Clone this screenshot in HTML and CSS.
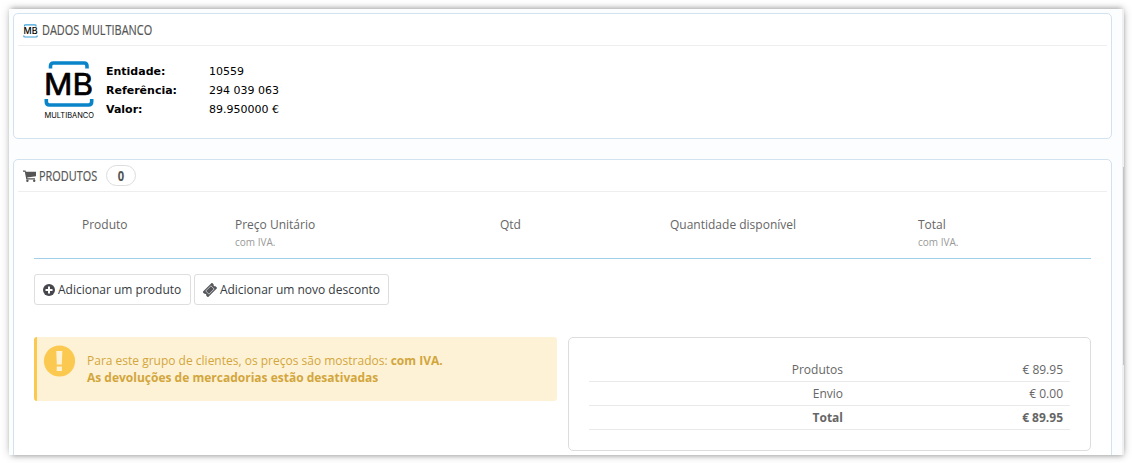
FILE: index.html
```
<!DOCTYPE html>
<html lang="pt">
<head>
  <meta charset="utf-8">
  <title>Encomenda</title>
  <link rel="stylesheet" href="styles.css">
</head>
<body>
  <div class="window">
    <div class="content">
      <section class="panel panel-mb">
        <h3 class="panel-heading">
          <svg class="icon-mb" width="15" height="14" viewBox="0 0 15 14">
            <path d="M1.500 2.500V1.500Q1.500 .8 2.500 .8H12Q13 .8 13 1.500V2.500M.8 11.500V12.300Q.8 13 2 13H13Q14.200 13 14.200 12.300V11.500" fill="none" stroke="#3fa0d6" stroke-width="1.200"/>
            <text class="icon-letters" x=".5" y="10" textLength="14" lengthAdjust="spacingAndGlyphs">MB</text>
          </svg>
          <span class="title title-mb"><span>DADOS MULTIBANCO</span></span>
        </h3>
        <div class="mb-data">
          <svg class="logo-mb" width="52" height="60" viewBox="0 0 52 60">
            <path d="M7.500 8.500V6Q7.500 3 10.500 3H41Q44 3 44 6V8.500" fill="none" stroke="#0a84c9" stroke-width="3.600"/>
            <path d="M3.300 39V41.500Q3.300 45 6.500 45H45.500Q48.700 45 48.700 41.500V39" fill="none" stroke="#0a84c9" stroke-width="3.600"/>
            <text class="logo-letters" x="1" y="34.500" textLength="49" lengthAdjust="spacingAndGlyphs">MB</text>
            <text class="logo-name" x="1.500" y="58" textLength="49.500" lengthAdjust="spacingAndGlyphs">MULTIBANCO</text>
          </svg>
          <dl class="mb-list">
            <dt>Entidade:</dt><dd>10559</dd>
            <dt>Referência:</dt><dd>294 039 063</dd>
            <dt>Valor:</dt><dd>89.950000 €</dd>
          </dl>
        </div>
      </section>

      <section class="panel panel-products">
        <h3 class="panel-heading">
          <svg class="icon-cart" width="13" height="12" viewBox="0 0 13 12">
            <path d="M0 .5H2.500L2.900 1.800H13V6.300L4.200 7.500L4.400 8.300H12V9.500H3.300L1.800 1.700H0Z" fill="#555"/>
            <circle cx="4.400" cy="10.800" r="1.200" fill="#555"/>
            <circle cx="11.200" cy="10.800" r="1.200" fill="#555"/>
          </svg>
          <span class="title title-products"><span>PRODUTOS</span></span>
          <span class="badge"><span>0</span></span>
        </h3>

        <div class="products-head">
          <div>Produto</div>
          <div>Preço Unitário<small>com IVA.</small></div>
          <div>Qtd</div>
          <div>Quantidade disponível</div>
          <div>Total<small>com IVA.</small></div>
        </div>

        <div class="actions">
          <button class="btn">
            <svg width="12" height="12" viewBox="0 0 12 12">
              <circle cx="6" cy="6" r="6" fill="#45474d"/>
              <path d="M6 2.500V9.500M2.500 6H9.500" stroke="#fff" stroke-width="2"/>
            </svg>
            Adicionar um produto
          </button>
          <button class="btn btn-discount">
            <svg width="14" height="14" viewBox="0 0 14 14">
              <g transform="rotate(-45 7 7)">
                <path d="M.3 3.200H13.700V5.700A1.400 1.400 0 0 0 13.700 8.300V10.800H.3V8.300A1.400 1.400 0 0 0 .3 5.700Z" fill="#55575c"/>
                <path d="M3.300 4.700H10.700V9.300H3.300Z" fill="none" stroke="#fff" stroke-width=".6"/>
              </g>
            </svg>
            Adicionar um novo desconto
          </button>
        </div>

        <div class="summary">
          <div class="alert">
            <svg width="32" height="32" viewBox="0 0 32 32">
              <circle cx="16.500" cy="16" r="15.600" fill="#fbc94f"/>
              <path d="M13.300 6H19.300L18.800 19.500H13.800ZM13.700 21.500H18.900V26H13.700Z" fill="#fef2d6"/>
            </svg>
            <div>Para este grupo de clientes, os preços são mostrados: <b>com IVA.</b><br><b>As devoluções de mercadorias estão desativadas</b></div>
          </div>
          <div class="totals">
            <div class="row"><span>Produtos</span><span>€ 89.95</span></div>
            <div class="row"><span>Envio</span><span>€ 0.00</span></div>
            <div class="row row-total"><span>Total</span><span>€ 89.95</span></div>
          </div>
        </div>
      </section>
    </div>
    <div class="scrollbar"><div class="thumb"></div></div>
  </div>
</body>
</html>
```
FILE: styles.css
```
* {
  box-sizing: border-box;
}
body {
  margin: 0;
  padding: 9px 8px 8px 9px;
  height: 463px;
  overflow: hidden;
  background: #fff;
  font: 12px/17px "Open Sans", sans-serif;
  color: #666;
}
.window {
  display: flex;
  width: 1115px;
  height: 446px;
  overflow: hidden;
  background: #fcfdfe;
  box-shadow: 0 0 9px rgba(0,0,0,0.18), 0 -3px 5px -2px rgba(0,0,0,0.26), 1px 3px 5px -2px rgba(0,0,0,0.26);
}
.content {
  flex: 1;
  padding: 4px 10px 0 4px;
}
.panel {
  width: 1099px;
  padding: 0 4px;
  border: 1px solid #d3e2ef;
  border-radius: 5px;
  background: #fff;
}
.panel-mb {
  height: 126px;
  margin-bottom: 20px;
}
.panel-products {
  height: 330px;
}
.panel-heading {
  display: flex;
  align-items: center;
  height: 32px;
  margin: 0;
  padding: 0 0 0 5px;
  border-bottom: 1px solid #eee;
  font-size: 14px;
  font-weight: 400;
  color: #555;
}
.icon-mb {
  margin: 2px 4px 0 0;
}
.icon-letters {
  font: 500 8.5px Inter, sans-serif;
}
.icon-cart {
  margin-right: 3px;
}
/* condensed heading letters */
.title span {
  display: inline-block;
  white-space: nowrap;
  transform: scaleX(0.78);
  transform-origin: left;
  -webkit-text-stroke: 0.2px #555;
}
.title-mb {
  width: 112px;
}
.title-products {
  width: 67px;
}
.badge {
  width: 30px;
  height: 21px;
  border: 1px solid #ddd;
  border-radius: 11px;
  font-size: 14px;
  font-weight: 700;
  line-height: 19px;
  text-align: center;
}
.badge span {
  display: inline-block;
  transform: scaleX(0.8);
}
.mb-data {
  display: flex;
  padding: 14px 0 0 25px;
}
.logo-letters {
  font: 400 30px Inter, sans-serif;
  stroke: #000;
  stroke-width: 0.7px;
  stroke-linejoin: round;
}
.logo-name {
  font: 400 7.2px Inter, sans-serif;
}
.mb-list {
  display: grid;
  grid-template-columns: 103px auto;
  grid-auto-rows: 19px;
  margin: 2px 0 0 11px;
  font: 11px/19px "DejaVu Sans", sans-serif;
  color: #000;
}
.mb-list dt {
  font-weight: 700;
}
.mb-list dd {
  margin: 0;
}
.products-head {
  display: grid;
  grid-template-columns: 153px 265px 170px 248px 1fr;
  height: 67px;
  margin: 0 16px 15px;
  padding: 24px 0 0 48px;
  border-bottom: 1px solid #a0d0eb;
}
.products-head small {
  display: block;
  font-size: 10px;
  line-height: 19px;
  color: #999;
}
.actions {
  display: flex;
  gap: 3px;
  margin: 0 16px 32px;
}
.btn {
  display: flex;
  align-items: center;
  gap: 3px;
  width: 157px;
  height: 31px;
  padding: 0 8px;
  border: 1px solid #dedede;
  border-radius: 3px;
  background: #fff;
  font: inherit;
  color: #363a41;
  white-space: nowrap;
}
.btn-discount {
  width: 195px;
}
.summary {
  display: flex;
  align-items: flex-start;
  gap: 11px;
  margin: 0 16px;
}
.alert {
  display: flex;
  width: 523px;
  height: 64px;
  padding: 8px 6px;
  border-left: 3px solid #fbc94f;
  border-radius: 3px;
  background: #fef2d6;
  color: #d2a63c;
}
.alert div {
  padding: 7px 0 0 12px;
}
.totals {
  width: 523px;
  height: 114px;
  padding: 20px;
  border: 1px solid #ddd;
  border-radius: 5px;
}
.row {
  display: grid;
  grid-template-columns: 254px 220px;
  height: 24px;
  border-bottom: 1px solid #eaeaea;
  line-height: 23px;
  text-align: right;
}
.row-total {
  font-weight: 700;
}
.scrollbar {
  width: 2px;
  padding-top: 158px;
  background: #f0f0f0;
}
.thumb {
  width: 1px;
  height: 198px;
  margin-left: 1px;
  background: #c5c5c5;
}
```
